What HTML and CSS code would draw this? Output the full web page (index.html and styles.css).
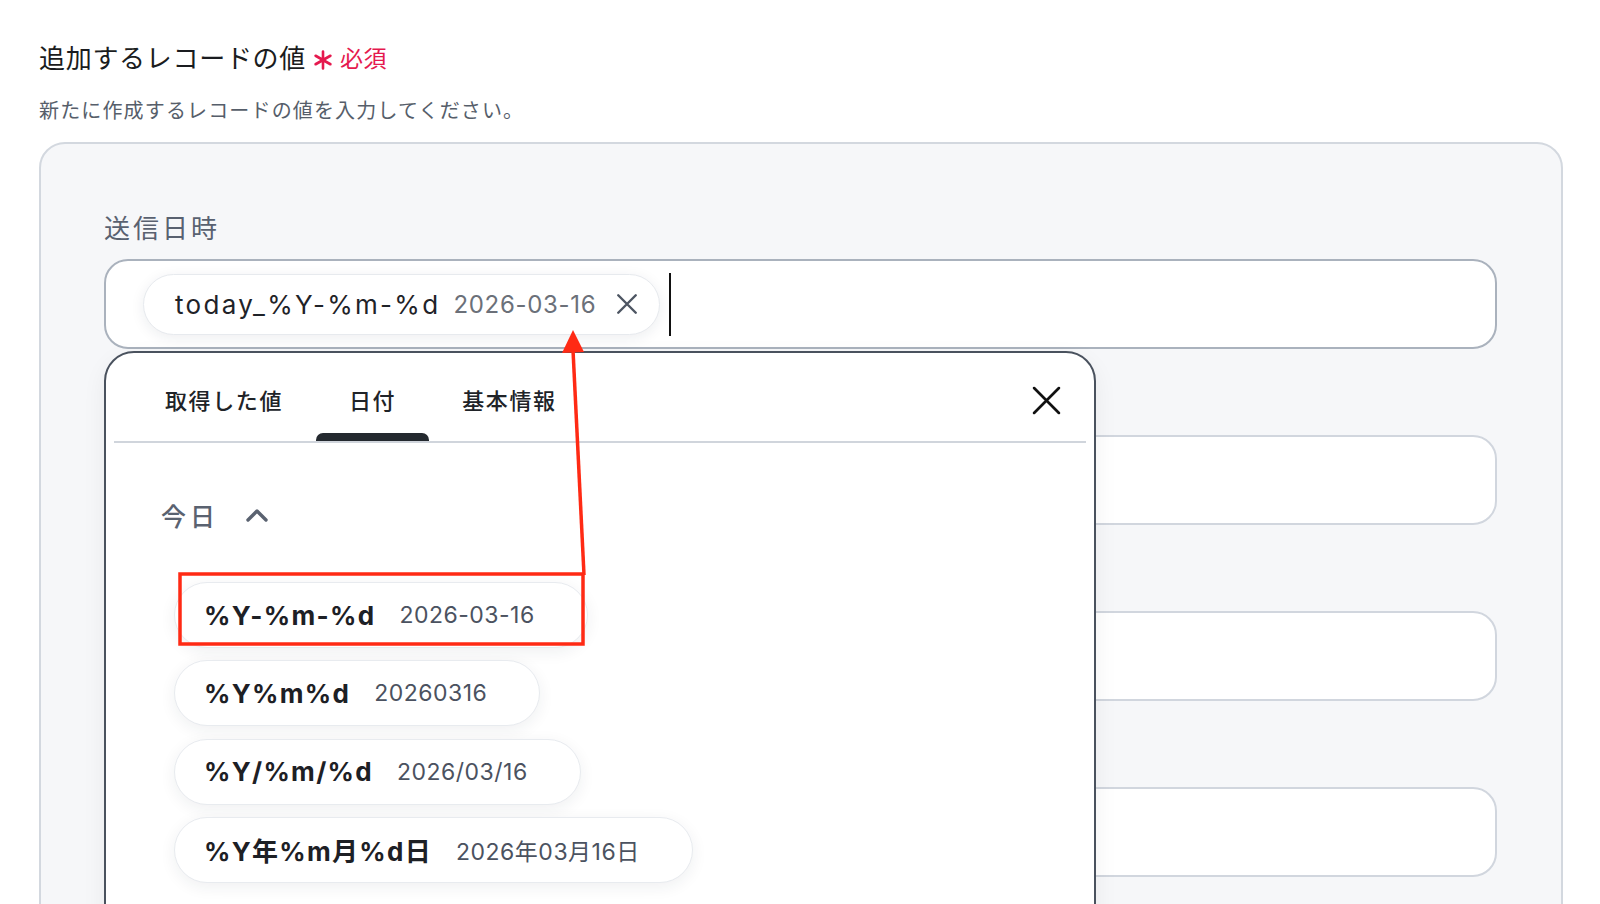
FILE: index.html
```html
<!DOCTYPE html>
<html lang="ja">
<head>
<meta charset="utf-8">
<title>追加するレコードの値</title>
<link rel="stylesheet" href="styles.css">
</head>
<body>
<div class="page">
  <h2 class="title">追加するレコードの値<span class="req"><svg class="ast" viewBox="0 0 20 20" width="20" height="20"><path d="M10 1.5V18.5M2.6 5.75L17.4 14.25M17.4 5.75L2.6 14.25" fill="none" stroke="currentColor" stroke-width="2.6" stroke-linecap="round"/></svg>必須</span></h2>
  <p class="desc">新たに作成するレコードの値を入力してください。</p>

  <div class="panel">
    <div class="field">
      <div class="label">送信日時</div>
      <div class="input focused">
        <span class="chip">
          <span class="chip-key">today_%Y-%m-%d</span>
          <span class="chip-val">2026-03-16</span>
          <svg class="chip-x" viewBox="0 0 24 24" width="28" height="28"><path d="M4.5 4.5L19.5 19.5M19.5 4.5L4.5 19.5" fill="none" stroke="currentColor" stroke-width="2.1" stroke-linecap="round"/></svg>
        </span>
        <span class="caret"></span>
      </div>
    </div>
    <div class="field">
      <div class="label"></div>
      <div class="input"></div>
    </div>
    <div class="field">
      <div class="label"></div>
      <div class="input"></div>
    </div>
    <div class="field">
      <div class="label"></div>
      <div class="input"></div>
    </div>
  </div>

  <div class="popup">
    <div class="tabs">
      <div class="tab">取得した値</div>
      <div class="tab active">日付</div>
      <div class="tab">基本情報</div>
      <svg class="close" viewBox="0 0 28 28" width="29" height="29"><path d="M2 2L26 26M26 2L2 26" fill="none" stroke="#111" stroke-width="2.6" stroke-linecap="round"/></svg>
    </div>
    <div class="section">
      <div class="section-head">
        <span>今日</span>
        <svg class="chev" viewBox="0 0 24 14" width="24" height="14"><path d="M3 12L12 3L21 12" fill="none" stroke="currentColor" stroke-width="3.4" stroke-linecap="round" stroke-linejoin="round"/></svg>
      </div>
      <div class="options">
        <div class="opt"><span class="opt-key">%Y-%m-%d</span><span class="opt-val">2026-03-16</span></div>
        <div class="opt"><span class="opt-key">%Y%m%d</span><span class="opt-val">20260316</span></div>
        <div class="opt"><span class="opt-key">%Y/%m/%d</span><span class="opt-val">2026/03/16</span></div>
        <div class="opt"><span class="opt-key">%Y年%m月%d日</span><span class="opt-val">2026年03月16日</span></div>
      </div>
    </div>
  </div>

  <svg class="annot" width="1600" height="904" viewBox="0 0 1600 904">
    <rect x="180" y="574" width="403" height="70" fill="none" stroke="#ff2a14" stroke-width="3.5"/>
    <line x1="584" y1="575" x2="573" y2="350" stroke="#ff2a14" stroke-width="3.5"/>
    <polygon points="573,330 562,353 584,352" fill="#ff2a14"/>
  </svg>
</div>
</body>
</html>
```

FILE: styles.css
```css
* { box-sizing: border-box; }
html, body {
  margin: 0;
  padding: 0;
  background: #ffffff;
  overflow: hidden;
}
body {
  font-family: Inter, "Noto Sans CJK JP", sans-serif;
  color: #1d2025;
}
.page {
  position: relative;
  width: 1600px;
  height: 904px;
  padding: 39px 37px 0 39px;
  overflow: hidden;
}
.title {
  margin: 0;
  font-family: "Noto Sans CJK JP", sans-serif;
  font-size: 26px;
  font-weight: 400;
  line-height: 36px;
  letter-spacing: 0.7px;
  color: #1a1c20;
  display: flex;
  align-items: center;
}
.req {
  margin-left: 7px;
  font-size: 23px;
  color: #e5194e;
  display: inline-flex;
  align-items: center;
  letter-spacing: 0.5px;
}
.ast {
  margin-right: 7px;
  position: relative;
  top: 3px;
}
.desc {
  margin: 20px 0 0;
  font-family: "Noto Sans CJK JP", sans-serif;
  font-size: 20px;
  line-height: 30px;
  letter-spacing: 1.15px;
  color: #565e6a;
}
.panel {
  margin-top: 17px;
  background: #f6f7f9;
  border: 2px solid #d3d8df;
  border-radius: 26px;
  padding: 66px 64px 0 63px;
  height: 900px;
}
.field + .field { margin-top: 37px; }
.label {
  font-family: "Noto Sans CJK JP", sans-serif;
  font-size: 26px;
  line-height: 34px;
  height: 34px;
  letter-spacing: 3px;
  color: #596170;
  margin-bottom: 15px;
}
.input {
  height: 90px;
  background: #fff;
  border: 2px solid #d1d6de;
  border-radius: 24px;
  display: flex;
  align-items: center;
  padding-left: 37px;
}
.input.focused { border-color: #aab2bd; }
.chip {
  height: 61px;
  display: inline-flex;
  align-items: center;
  padding: 0 18px 0 31px;
  background: #fff;
  border: 1.5px solid #e7eaee;
  border-radius: 31px;
  box-shadow: 0 3px 14px rgba(30, 40, 60, 0.08);
}
.chip-key {
  font-size: 26px;
  letter-spacing: 2.3px;
  color: #1f2328;
}
.chip-val {
  margin-left: 13px;
  font-size: 24px;
  letter-spacing: 0.7px;
  color: #6b7079;
}
.chip-x {
  margin-left: 17px;
  color: #4d5562;
}
.caret {
  width: 2px;
  height: 63px;
  background: #111;
  margin-left: 9px;
}

.popup {
  position: absolute;
  left: 104px;
  top: 351px;
  width: 992px;
  height: 620px;
  background: #fff;
  border: 2px solid #4a525e;
  border-radius: 30px;
  padding: 0 8px;
  box-shadow: 0 8px 24px rgba(0,0,0,0.06);
}
.tabs {
  display: flex;
  align-items: flex-start;
  height: 90px;
  padding-left: 18px;
  border-bottom: 2px solid #d0d5dc;
}
.tab {
  position: relative;
  height: 88px;
  padding: 30px 33px 0;
  font-family: "Noto Sans CJK JP", sans-serif;
  font-size: 22px;
  font-weight: 500;
  line-height: 32px;
  letter-spacing: 1.6px;
  color: #202328;
}
.tab.active::after {
  content: "";
  position: absolute;
  left: 0;
  right: 0;
  bottom: 0;
  height: 8px;
  background: #24292f;
  border-radius: 7px 7px 0 0;
}
.close {
  margin-left: auto;
  margin-right: 25px;
  margin-top: 33px;
}
.section {
  padding: 55px 0 0 47px;
}
.section-head {
  display: flex;
  align-items: center;
  height: 34px;
  font-family: "Noto Sans CJK JP", sans-serif;
  font-size: 25px;
  font-weight: 500;
  letter-spacing: 4px;
  color: #5a6270;
}
.chev {
  margin-left: 26px;
  color: #5a6270;
}
.options {
  margin-top: 50px;
  margin-left: 13px;
  display: flex;
  flex-direction: column;
  align-items: flex-start;
  gap: 12.3px;
}
.opt {
  height: 66px;
  display: inline-flex;
  align-items: center;
  padding: 0 52px 0 29px;
  background: #fff;
  border: 1.5px solid #e8ebef;
  border-radius: 33px;
  box-shadow: 0 4px 16px rgba(30, 40, 60, 0.07);
}
.opt-key {
  font-size: 26px;
  font-weight: 700;
  letter-spacing: 1.3px;
  color: #1d2025;
}
.opt-val {
  margin-left: 24px;
  font-size: 23px;
  letter-spacing: 0.5px;
  color: #4b5260;
}
.annot {
  position: absolute;
  left: 0;
  top: 0;
  pointer-events: none;
}
```
